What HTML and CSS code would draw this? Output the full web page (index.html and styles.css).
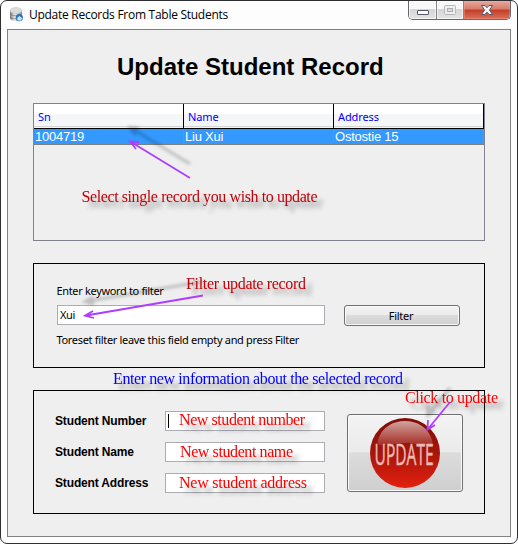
FILE: index.html
```html
<!DOCTYPE html>
<html lang="en">
<head>
<meta charset="utf-8">
<title>Update Records From Table Students</title>
<link rel="stylesheet" href="styles.css">
</head>
<body>
<div class="window">
  <header class="titlebar">
    <svg class="app-icon" width="14" height="16" viewBox="0 0 14 16">
      <defs><linearGradient id="cyl"><stop offset="0" stop-color="#777"/><stop offset=".4" stop-color="#eee"/><stop offset="1" stop-color="#888"/></linearGradient></defs>
      <path d="M0 3v8c0 4 12 4 12 0V3z" fill="url(#cyl)"/>
      <ellipse cx="6" cy="3.500" rx="6" ry="3" fill="#dcdcdc" stroke="#bbb" stroke-width=".5"/>
      <path d="M0 6.500c0 3 12 3 12 0M0 9.500c0 3 12 3 12 0" fill="none" stroke="#777" stroke-width=".7"/>
      <circle cx="9.300" cy="10.700" r="3.600" fill="#2f72b8"/>
      <path d="M6.500 11.500l3-2.500 3 2.500h-1v2h-4v-2z" fill="#c4ebfc"/>
    </svg>
    <span class="caption">Update Records From Table Students</span>
    <div class="controls">
      <span class="control"><svg width="14" height="8" viewBox="0 0 14 8"><rect x="1.500" y="2.500" width="11" height="4" rx=".5" fill="#fff" stroke="#55586b"/></svg></span>
      <span class="control maximize"><svg width="12" height="10" viewBox="0 0 12 10"><rect x=".5" y=".5" width="11" height="9" rx="1" fill="#eee" stroke="#b7b7b7"/><rect x="3.500" y="3.500" width="5" height="3" fill="#ddd" stroke="#aaa"/></svg></span>
      <span class="control close"><svg width="14" height="12" viewBox="0 0 14 12"><path d="M1.500 1.500h3.500l2 2.200 2-2.200h3.500L9.500 6l3 4.500H9L7 8.200 5 10.500H1.500l3-4.500z" fill="#f2f2f7" stroke="#595567"/></svg></span>
    </div>
  </header>
  <main class="content">
    <h1>Update Student Record</h1>
    <section class="table">
      <div class="row head"><span>Sn</span><span>Name</span><span>Address</span></div>
      <div class="row selected"><span>1004719</span><span>Liu Xui</span><span>Ostostie 15</span></div>
    </section>
    <section class="panel filter">
      <div class="filter-form">
        <label>Enter keyword to filter</label>
        <div class="field"><span class="value">Xui</span></div>
        <p>Toreset filter leave this field empty and press Filter</p>
      </div>
      <button class="button filter-button">Filter</button>
    </section>
    <section class="panel update">
      <div class="update-form">
        <label>Student Number</label><div class="field"><i class="caret"></i></div>
        <label>Student Name</label><div class="field"></div>
        <label>Student Address</label><div class="field"></div>
      </div>
      <button class="button update-button">
        <svg class="ball" width="70" height="70" viewBox="0 0 70 70">
          <defs>
            <linearGradient id="ball" x2="0" y2="1"><stop offset="0" stop-color="#7c0e08"/><stop offset=".5" stop-color="#a6160c"/><stop offset="1" stop-color="#e3200f"/></linearGradient>
            <linearGradient id="shine" x2="0" y2="1"><stop offset="0" stop-color="#d1a29e"/><stop offset="1" stop-color="#a52b22"/></linearGradient>
          </defs>
          <circle cx="35" cy="35" r="35" fill="url(#ball)"/>
          <path d="M8 22C12 9 23 3 35 3s23 6 27 19c3 10-13 3-27 3S5 32 8 22z" fill="url(#shine)"/>
          <text class="ball-text" transform="translate(4.500 47) scale(.52 1)" textLength="114">UPDATE</text>
        </svg>
      </button>
    </section>
  </main>
  <svg class="notes" width="518" height="544" viewBox="0 0 518 544">
    <defs>
      <g id="arrow-select"><path d="M190 178L131 142M136 149L130 141.500L139 142"/></g>
      <g id="arrow-filter"><path d="M203 295.500L86 315.500M93 311L85 315.700L94 318"/></g>
      <g id="arrow-click"><path d="M450 402L428 429M428 420L427.500 429.500L435 425"/></g>
    </defs>
    <g class="arrow shadow"><use href="#arrow-select" y="-14"/><use href="#arrow-filter" y="-14"/><use href="#arrow-click" y="-14"/></g>
    <g class="note">
      <text class="dark" x="81.500" y="202" textLength="236">Select single record you wish to update</text>
      <text class="dark" x="186" y="289" textLength="120">Filter update record</text>
      <text class="blue" x="113" y="384" textLength="290">Enter new information about the selected record</text>
      <text x="405" y="403" textLength="93">Click to update</text>
      <text x="179" y="425" textLength="126">New student number</text>
      <text x="180" y="457" textLength="113">New student name</text>
      <text x="179" y="488" textLength="128">New student address</text>
    </g>
    <g class="arrow"><use href="#arrow-select"/><use href="#arrow-filter"/><use href="#arrow-click"/></g>
  </svg>
</div>
</body>
</html>
```
FILE: styles.css
```css
* { box-sizing: border-box; }
body { margin: 0; background: #fff; }
.window {
  position: relative;
  width: 518px;
  height: 544px;
  padding: 0 6px 6px;
  border: 1px solid #2e2e30;
  border-radius: 7px;
  background: #fdfdfd;
  font-family: "Noto Sans", sans-serif;
  color: #000;
}
.titlebar { display: flex; height: 28px; padding-left: 3px; }
.app-icon { margin-top: 6px; flex: none; }
.caption { margin: 5px 0 0 5px; font: 12px/17px "Open Sans", sans-serif; letter-spacing: -0.27px; white-space: nowrap; }
.controls {
  display: flex;
  width: 103px;
  height: 19px;
  margin-left: auto;
  border: 1px solid #66666b;
  border-top: 0;
  border-radius: 0 0 5px 5px;
  overflow: hidden;
}
.control {
  display: flex;
  width: 28px;
  justify-content: center;
  align-items: center;
  border-right: 1px solid #85858b;
  background: linear-gradient(#f8f8f8 0 45%, #d5d5d8 46%, #e5e5e6);
  box-shadow: inset 0 0 0 1px #ffffff90;
}
.control:first-child svg { margin-top: 3px; }
.control.maximize { width: 27px; }
.control.close { width: 46px; border: 0; background: linear-gradient(#e7a79c, #d97b69 45%, #c33d27 50%, #db7059); box-shadow: inset 0 0 0 1px #f5b9a950; }
.content {
  display: flex;
  flex-direction: column;
  width: 504px;
  height: 508px;
  padding: 0 25px;
  border: 1px solid #808080;
  background: #efefef;
}
h1 { height: 73px; margin: 0; padding: 22px 0 0 84px; font: bold 24px/30px "Liberation Sans", sans-serif; white-space: nowrap; }
.table { height: 138px; border: 1px solid #80838d; }
.row { display: grid; grid-template-columns: 150px 150px 150px; }
.head { height: 25px; border-bottom: 1px solid #000; background: linear-gradient(#fff 0 40%, #f5f6f8 41% 91%, #d5d5d5 92% 95%, #f4f4f4 96%); color: #00f; font-size: 11px; line-height: 26px; letter-spacing: -0.1px; }
.head span { padding-left: 4px; border-right: 1px solid #000; }
.selected { height: 16px; border-bottom: 1px solid #808080; background: #3399ff; color: #fff; font: 13px/15px "Liberation Sans", sans-serif; }
.selected span { padding-left: 1px; border-right: 1px solid #7390ae; letter-spacing: -0.22px; }
.panel { display: flex; border: 1px solid #000; }
.filter { height: 105px; margin-top: 22px; padding: 19px 24px 0 23px; font-size: 11px; line-height: 16px; }
.filter-form { width: 268px; }
.filter-form label { display: block; height: 22px; letter-spacing: -0.34px; }
.filter-form p { margin: 7px 0 0; letter-spacing: -0.32px; white-space: nowrap; }
.filter-form label, .filter-form p { text-indent: -0.5px; }
.field { height: 20px; border: 1px solid #abadb3; background: #fff; }
.value { display: block; padding-left: 2px; line-height: 18px; letter-spacing: -0.4px; }
.button {
  padding: 0;
  border: 1px solid #707070;
  border-radius: 3px;
  background: linear-gradient(#f3f3f3, #ebebeb 48%, #dcdcdc 50%, #cfcfcf);
  box-shadow: inset 0 0 0 1px #fafafa;
  color: #000;
  font: 11px "Noto Sans", sans-serif;
}
.filter-button { width: 116px; height: 21px; margin: 22px 0 0 19px; padding: 0 2px 1px 0; letter-spacing: -0.25px; }
.update { height: 124px; margin-top: 22px; padding: 20px 21px 0; }
.update-form { display: grid; grid-template-columns: 110px 160px; grid-auto-rows: 20px; row-gap: 11px; height: 82px; font: bold 12px/20px "Liberation Sans", sans-serif; letter-spacing: -0.15px; }
.caret { display: block; width: 1px; height: 14px; margin: 2px 0 0 2px; background: #000; }
.update-button { display: flex; align-items: center; justify-content: center; width: 116px; height: 78px; margin: 3px 0 0 22px; }
.ball { overflow: visible; }
.ball-text { font: 30px "Open Sans", sans-serif; letter-spacing: 0; fill: #f0b9b3; stroke: #f0b9b3; stroke-width: .5; }
.notes { position: absolute; left: -1px; top: -1px; pointer-events: none; }
.note { font: 16px "Liberation Serif", serif; fill: #f00; filter: drop-shadow(6px 6px 2px #0005); }
.dark { fill: #c40008; }
.blue { fill: #00f; }
.arrow { fill: none; stroke: #ae3dff; stroke-width: 1.8; }
.shadow { stroke: #0003; stroke-width: 3; filter: blur(1.5px); }
```
